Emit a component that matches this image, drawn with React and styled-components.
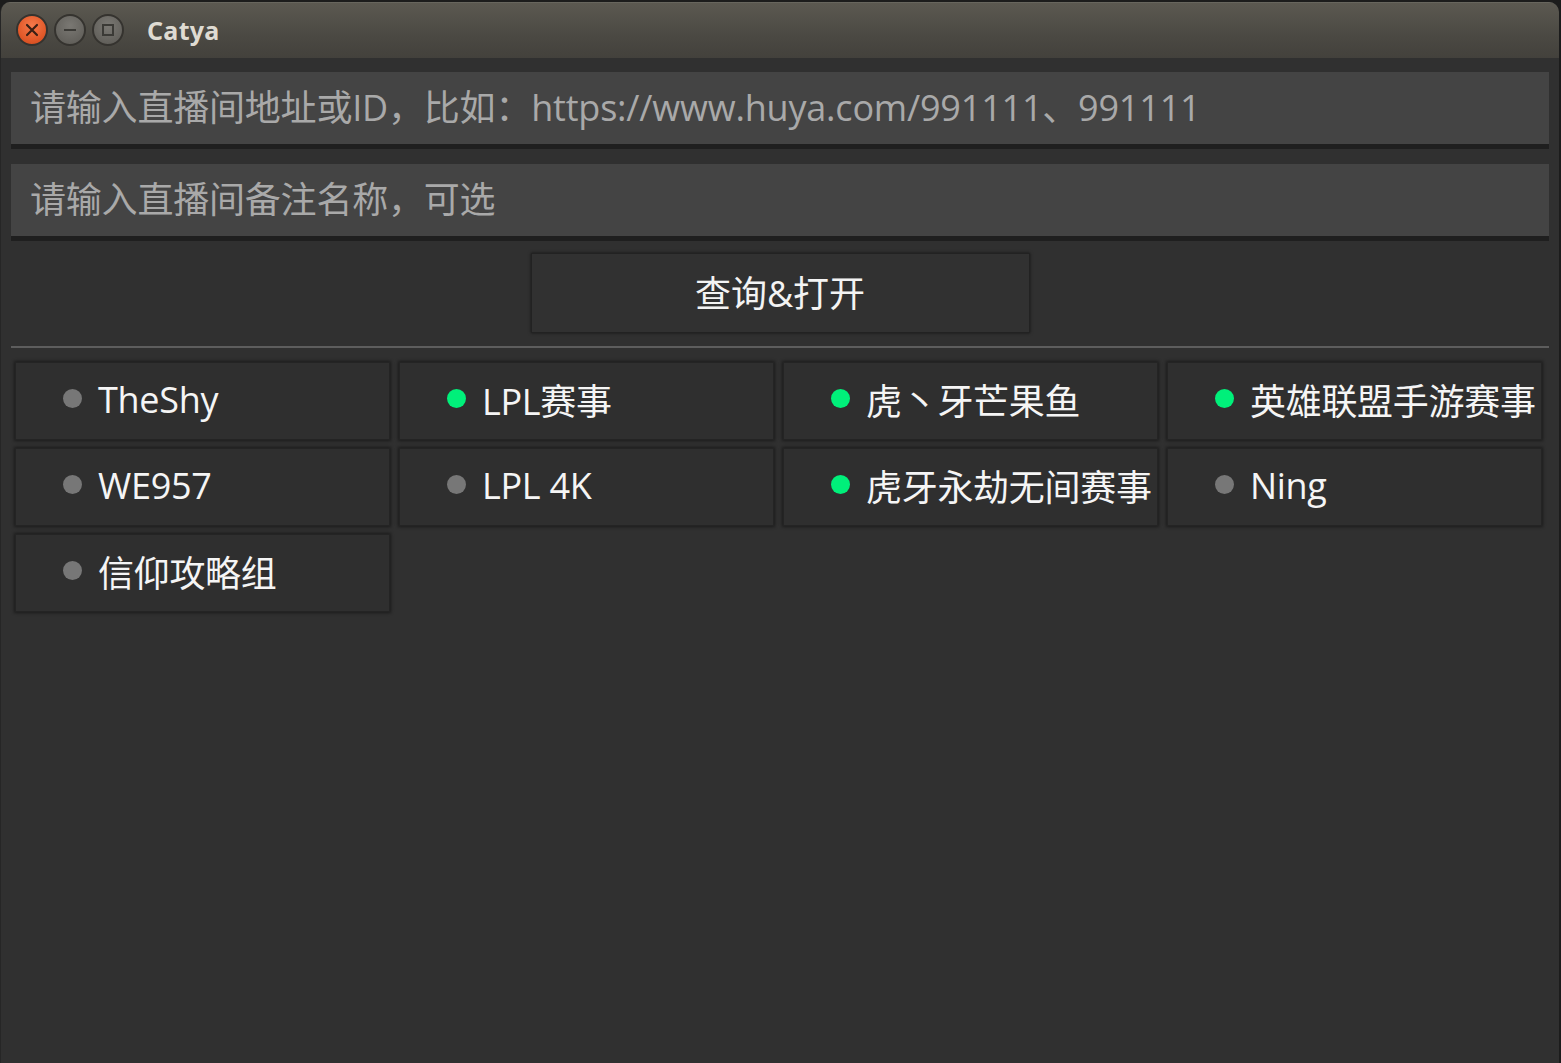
import styled, { createGlobalStyle } from 'styled-components';

const GlobalStyle = createGlobalStyle`
    html, body {
        margin: 0;
        padding: 0;
        background: #1c1c1c;
    }
    * {
        box-sizing: border-box;
    }
`;

const Window = styled.div`
    width: 1559px;
    height: 1061px;
    margin-top: 2px;
    display: flex;
    flex-direction: column;
    background: #303030;
    border-left: 1px solid #262626;
    border-top-left-radius: 10px;
    border-top-right-radius: 10px;
    overflow: hidden;
    font-family: 'Open Sans', 'Noto Sans CJK SC', sans-serif;
`;

const TitleBar = styled.div`
    height: 56px;
    flex-shrink: 0;
    display: flex;
    align-items: center;
    padding-left: 15px;
    background: linear-gradient(to bottom, #5c5951 0%, #4b4943 60%, #43413c 100%);
    box-shadow: inset 0 1px 0 rgba(255, 255, 255, 0.08);
`;

const WinButton = styled.div`
    width: 32px;
    height: 32px;
    border-radius: 50%;
    margin-right: 6px;
    display: flex;
    align-items: center;
    justify-content: center;
    border: 2px solid #35332f;
    background: ${(p) =>
        p.$close
            ? 'radial-gradient(circle at 50% 35%, #f47a4c 0%, #e35a2a 60%, #c9461b 100%)'
            : 'radial-gradient(circle at 50% 35%, #7a7873 0%, #64625d 70%, #575550 100%)'};

    & svg {
        display: block;
    }
`;

const Title = styled.div`
    margin-left: 17px;
    font-family: 'Noto Sans', 'Open Sans', sans-serif;
    font-weight: 700;
    font-size: 25px;
    color: #dfdbd2;
    letter-spacing: 0.3px;
`;

const Content = styled.div`
    flex: 1;
    display: flex;
    flex-direction: column;
    padding: 14px 10px 0 10px;
`;

const Field = styled.div`
    height: 77px;
    display: flex;
    align-items: center;
    padding: 0 19px 5px;
    background: #444444;
    border-bottom: 5px solid #1f1f1f;
    font-size: 36px;
    color: #a9a9a9;
    white-space: nowrap;
    letter-spacing: -0.2px;
    margin-bottom: ${(p) => p.$gap || 0}px;
`;

const ButtonRow = styled.div`
    display: flex;
    justify-content: center;
    padding: 12px 0 13px;
`;

const QueryButton = styled.div`
    width: 499px;
    height: 80px;
    display: flex;
    align-items: center;
    justify-content: center;
    padding-bottom: 4px;
    background: #313131;
    border: 1px solid #222;
    box-shadow: 0 0 3px rgba(0, 0, 0, 0.6);
    font-size: 36px;
    color: #f3f3f3;
`;

const Separator = styled.div`
    height: 2px;
    background: #5d5d5d;
    margin-bottom: 14px;
`;

const Grid = styled.div`
    display: grid;
    grid-template-columns: repeat(4, 375px);
    grid-auto-rows: 78px;
    column-gap: 9px;
    row-gap: 8px;
    padding: 0 4px;
`;

const Card = styled.div`
    display: flex;
    align-items: center;
    padding-left: 47px;
    padding-bottom: 3px;
    background: #2f2f2f;
    border: 1px solid #242424;
    box-shadow: 0 0 3px 1px rgba(0, 0, 0, 0.45);
    font-size: 36px;
    color: #f5f5f5;
    white-space: nowrap;
    overflow: hidden;
    letter-spacing: -0.3px;
`;

const Dot = styled.span`
    width: 19px;
    height: 19px;
    border-radius: 50%;
    flex-shrink: 0;
    margin-right: 16px;
    margin-top: -2px;
    background: ${(p) => (p.$live ? '#00f07a' : '#777777')};
`;

const rooms = [
    { name: 'TheShy', live: false },
    { name: 'LPL赛事', live: true },
    { name: '虎丶牙芒果鱼', live: true },
    { name: '英雄联盟手游赛事', live: true },
    { name: 'WE957', live: false },
    { name: 'LPL 4K', live: false },
    { name: '虎牙永劫无间赛事', live: true },
    { name: 'Ning', live: false },
    { name: '信仰攻略组', live: false },
];

const App = () => {
    return (
        <>
            <GlobalStyle />
            <Window>
                <TitleBar>
                    <WinButton $close>
                        <svg width='14' height='14' viewBox='0 0 14 14'>
                            <path d='M2 2 L12 12 M12 2 L2 12' stroke='#3a1f14' strokeWidth='2.2' strokeLinecap='round' />
                        </svg>
                    </WinButton>
                    <WinButton>
                        <svg width='14' height='14' viewBox='0 0 14 14'>
                            <path d='M1 7 H13' stroke='#3b3a36' strokeWidth='2' />
                        </svg>
                    </WinButton>
                    <WinButton>
                        <svg width='14' height='14' viewBox='0 0 14 14'>
                            <rect x='2' y='2' width='10' height='10' fill='none' stroke='#3b3a36' strokeWidth='2' />
                        </svg>
                    </WinButton>
                    <Title>Catya</Title>
                </TitleBar>
                <Content>
                    <Field $gap={15}>请输入直播间地址或ID，比如：https://www.huya.com/991111、991111</Field>
                    <Field>请输入直播间备注名称，可选</Field>
                    <ButtonRow>
                        <QueryButton>查询&amp;打开</QueryButton>
                    </ButtonRow>
                    <Separator />
                    <Grid>
                        {rooms.map((r) => (
                            <Card key={r.name}>
                                <Dot $live={r.live} />
                                {r.name}
                            </Card>
                        ))}
                    </Grid>
                </Content>
            </Window>
        </>
    );
};

export default App;
